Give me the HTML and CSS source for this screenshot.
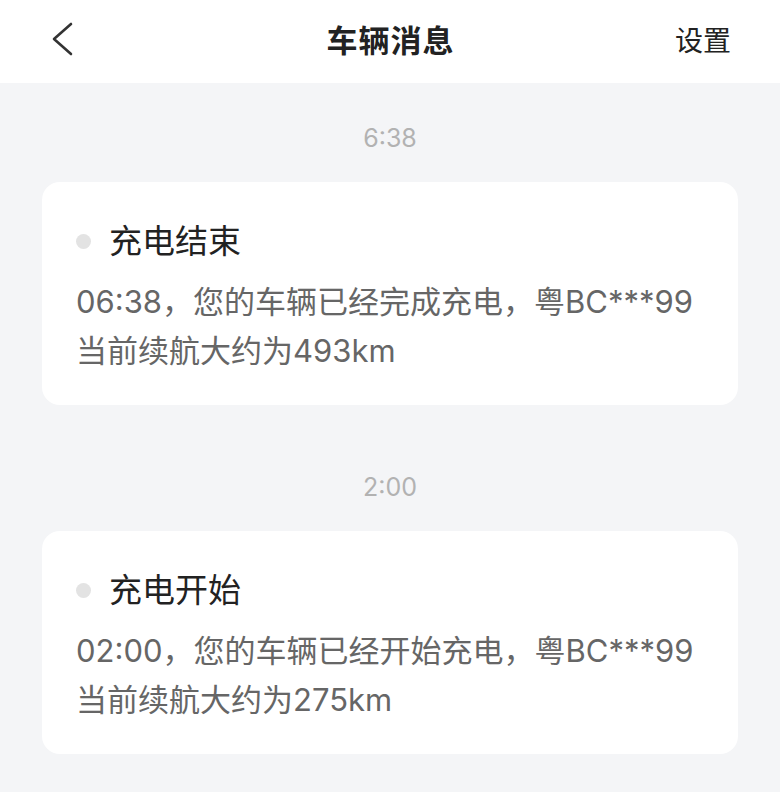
FILE: index.html
```html
<!DOCTYPE html>
<html lang="zh-CN">
<head>
  <meta charset="UTF-8" />
  <meta name="viewport" content="width=device-width, initial-scale=1.0"/>
  <title>车辆消息</title>
  <link rel="stylesheet" href="styles.css">
</head>
<body>
  <header class="nav-bar">
    <a class="back" href="#" aria-label="返回">
      <svg width="24" height="34" viewBox="0 0 24 34">
        <path d="M21 2 L4 17 L21 32" fill="none" stroke="#333" stroke-width="2.6" stroke-linecap="round" stroke-linejoin="round"/>
      </svg>
    </a>
    <h1 class="nav-title">车辆消息</h1>
    <a class="nav-action" href="#">设置</a>
  </header>

  <main class="message-list">
    <section class="group">
      <div class="time">6:38</div>
      <div class="card">
        <div class="card-title"><span class="dot"></span>充电结束</div>
        <p class="card-text">06:38，您的车辆已经完成充电，粤BC***99<br>当前续航大约为493km</p>
      </div>
    </section>

    <section class="group">
      <div class="time">2:00</div>
      <div class="card">
        <div class="card-title"><span class="dot"></span>充电开始</div>
        <p class="card-text">02:00，您的车辆已经开始充电，粤BC***99<br>当前续航大约为275km</p>
      </div>
    </section>
  </main>
</body>
</html>
```

FILE: styles.css
```css
:root {
  --bg: #f4f5f7;
  --card: #ffffff;
  --title: #222222;
  --text: #666666;
  --muted: #b2b2b2;
  --dot: #e3e3e3;
}

* {
  box-sizing: border-box;
}

body {
  margin: 0;
  background-color: var(--bg);
  font-family: "Inter", "Noto Sans CJK SC", sans-serif;
  color: var(--title);
}

.nav-bar {
  height: 83px;
  background-color: #fff;
  display: flex;
  align-items: center;
  justify-content: space-between;
  padding: 0 49px 6px 50px;
}

.back {
  display: flex;
  width: 60px;
}

.nav-title {
  margin: 0;
  font-size: 31px;
  font-weight: 700;
  letter-spacing: 1px;
}

.nav-action {
  width: 60px;
  text-align: right;
  font-size: 28px;
  color: var(--title);
  text-decoration: none;
}

.message-list {
  padding: 0 42px 40px;
}

.group + .group {
  margin-top: 27px;
}

.time {
  padding: 40px 0 29px;
  line-height: 30px;
  text-align: center;
  font-size: 25px;
  color: var(--muted);
}

.card {
  background-color: var(--card);
  border-radius: 18px;
  padding: 37px 34px 30px;
}

.card-title {
  display: flex;
  align-items: center;
  gap: 18px;
  font-size: 33px;
  line-height: 44px;
  color: var(--title);
}

.dot {
  width: 15px;
  height: 15px;
  border-radius: 50%;
  background-color: var(--dot);
}

.card-text {
  margin: 14px 0 0;
  font-size: 31px;
  line-height: 49px;
  color: var(--text);
  white-space: nowrap;
}
```
